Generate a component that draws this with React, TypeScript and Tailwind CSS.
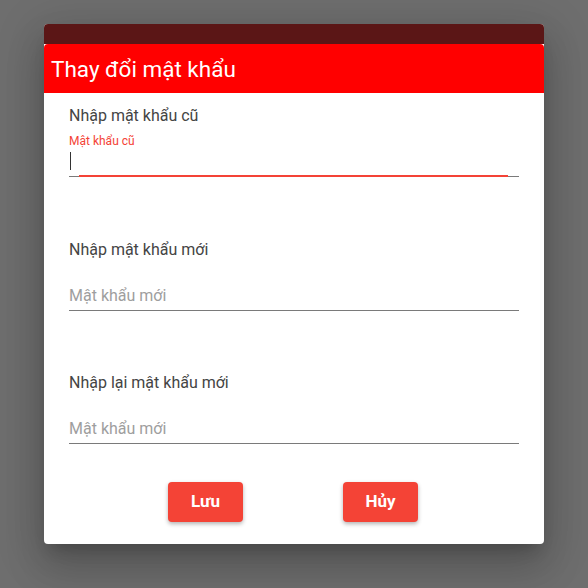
import React from "react";

const Field = ({
  title,
  placeholder,
  focused,
}: {
  title: string;
  placeholder: string;
  focused?: boolean;
}) => {
  return (
    <div className="flex flex-col">
      <div className="h-6 text-[16px] leading-6 text-[#444]">{title}</div>
      <div className="relative pt-[22px] border-b border-[#7a7a7a]">
        {focused && (
          <div className="absolute left-0 top-[5px] text-[12px] leading-4 text-[#f44336]">
            {placeholder}
          </div>
        )}
        {focused ? (
          <div className="h-6 pb-[3px]">
            <div className="ml-px mt-[2px] h-[18px] w-px bg-[#333]"></div>
          </div>
        ) : (
          <div className="h-[26px] pb-[2px] text-[16px] leading-6 text-[#9e9e9e]">{placeholder}</div>
        )}
        {focused && (
          <div className="absolute left-[10px] right-[11px] bottom-[-1px] h-[2px] bg-[#f44336]"></div>
        )}
      </div>
    </div>
  );
};

const App = () => {
  return (
    <div
      className="w-[588px] h-[588px] bg-[#6e6e6e] pt-6 pl-11"
      style={{ fontFamily: "Roboto, 'Noto Sans', sans-serif" }}
    >
      <div className="w-[500px] h-[520px] bg-white rounded flex flex-col overflow-hidden shadow-[0_11px_15px_-7px_rgba(0,0,0,0.2),0_24px_38px_3px_rgba(0,0,0,0.14),0_9px_46px_8px_rgba(0,0,0,0.12)]">
        <div className="h-5 bg-[#5b1616]"></div>
        <div className="h-[49px] bg-[#ff0000] rounded-t flex items-center px-[7px]">
          <h2 className="text-[22.5px] text-white leading-7">Thay đổi mật khẩu</h2>
        </div>
        <div className="flex flex-col px-[25px] pt-[11px]">
          <Field title="Nhập mật khẩu cũ" placeholder="Mật khẩu cũ" focused />
          <div className="h-[61px]"></div>
          <Field title="Nhập mật khẩu mới" placeholder="Mật khẩu mới" />
          <div className="h-[60px]"></div>
          <Field title="Nhập lại mật khẩu mới" placeholder="Mật khẩu mới" />
          <div className="flex justify-center gap-[100px] mt-[38px] pr-[2px]">
            <button className="w-[75px] h-10 rounded bg-[#f44336] text-white font-bold text-[17px] shadow-[0_2px_4px_rgba(0,0,0,0.3)]">
              Lưu
            </button>
            <button className="w-[75px] h-10 rounded bg-[#f44336] text-white font-bold text-[17px] shadow-[0_2px_4px_rgba(0,0,0,0.3)]">
              Hủy
            </button>
          </div>
        </div>
      </div>
    </div>
  );
};

export default App;
